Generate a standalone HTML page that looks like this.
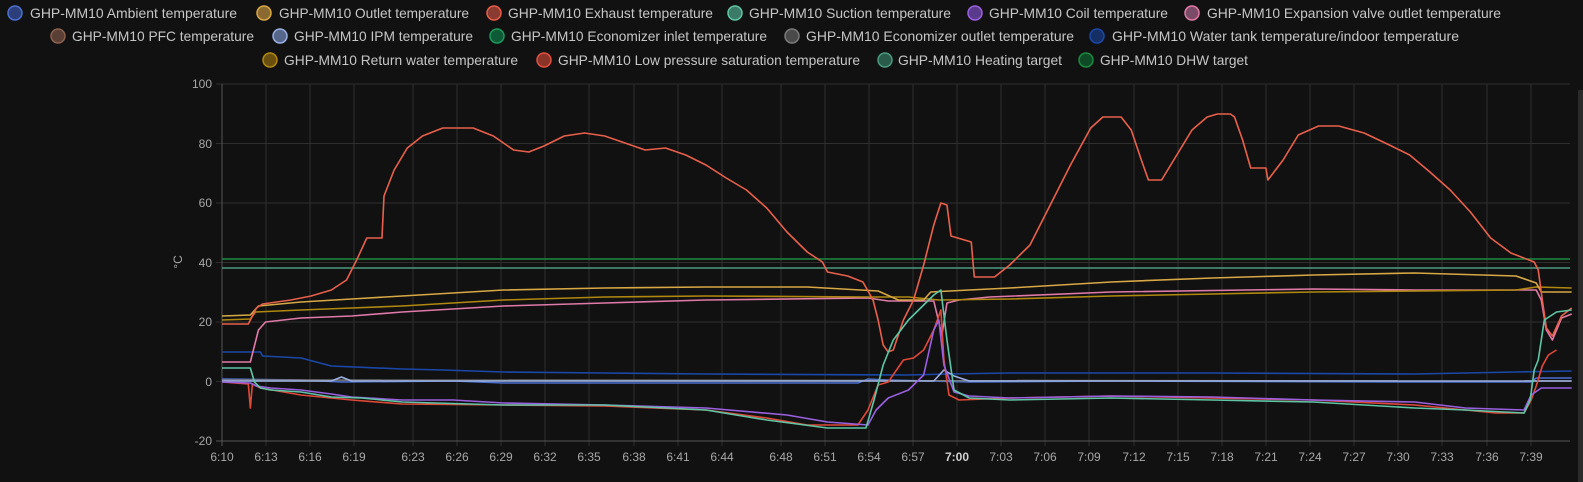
<!DOCTYPE html>
<html><head><meta charset="utf-8"><style>
html,body{margin:0;padding:0;background:#111111;width:1583px;height:482px;overflow:hidden}
svg{display:block}
text{font-family:"Liberation Sans",Roboto,sans-serif}
.lg{font-size:14px;fill:#c6c6c6}
.ax{font-size:12px;fill:#a8a8a8}
</style></head><body>
<svg width="1583" height="482" viewBox="0 0 1583 482" xmlns="http://www.w3.org/2000/svg">
<rect width="1583" height="482" fill="#111111"/>
<rect x="1578" y="90" width="5" height="392" fill="#2a2a2a"/>
<!-- legend -->
<g stroke-width="1.5">
<circle cx="15" cy="13" r="7" fill="#2c3f7a" stroke="#4a6fd0"/><text class="lg" x="30" y="18" textLength="207" lengthAdjust="spacingAndGlyphs">GHP-MM10 Ambient temperature</text>
<circle cx="264" cy="13" r="7" fill="#8a6a30" stroke="#d8a845"/><text class="lg" x="279" y="18" textLength="190" lengthAdjust="spacingAndGlyphs">GHP-MM10 Outlet temperature</text>
<circle cx="494" cy="13" r="7" fill="#8a3a30" stroke="#e85c48"/><text class="lg" x="508" y="18" textLength="205" lengthAdjust="spacingAndGlyphs">GHP-MM10 Exhaust temperature</text>
<circle cx="735" cy="13" r="7" fill="#3a7a66" stroke="#5fc5a5"/><text class="lg" x="749" y="18" textLength="202" lengthAdjust="spacingAndGlyphs">GHP-MM10 Suction temperature</text>
<circle cx="975" cy="13" r="7" fill="#5a3a8a" stroke="#9a60e0"/><text class="lg" x="989" y="18" textLength="179" lengthAdjust="spacingAndGlyphs">GHP-MM10 Coil temperature</text>
<circle cx="1192" cy="13" r="7" fill="#7a4a66" stroke="#e07aa8"/><text class="lg" x="1207" y="18" textLength="294" lengthAdjust="spacingAndGlyphs">GHP-MM10 Expansion valve outlet temperature</text>

<circle cx="58" cy="36" r="7" fill="#5a4034" stroke="#8a6050"/><text class="lg" x="72" y="41" textLength="182" lengthAdjust="spacingAndGlyphs">GHP-MM10 PFC temperature</text>
<circle cx="280" cy="36" r="7" fill="#56668a" stroke="#9ab0e0"/><text class="lg" x="294" y="41" textLength="179" lengthAdjust="spacingAndGlyphs">GHP-MM10 IPM temperature</text>
<circle cx="497" cy="36" r="7" fill="#0e5a36" stroke="#1a9a5a"/><text class="lg" x="511" y="41" textLength="256" lengthAdjust="spacingAndGlyphs">GHP-MM10 Economizer inlet temperature</text>
<circle cx="792" cy="36" r="7" fill="#4a4a4a" stroke="#7a7a7a"/><text class="lg" x="806" y="41" textLength="268" lengthAdjust="spacingAndGlyphs">GHP-MM10 Economizer outlet temperature</text>
<circle cx="1097" cy="36" r="7" fill="#162e66" stroke="#1a48a8"/><text class="lg" x="1112" y="41" textLength="347" lengthAdjust="spacingAndGlyphs">GHP-MM10 Water tank temperature/indoor temperature</text>

<circle cx="270" cy="60" r="7" fill="#6a5010" stroke="#b08810"/><text class="lg" x="284" y="65" textLength="234" lengthAdjust="spacingAndGlyphs">GHP-MM10 Return water temperature</text>
<circle cx="544" cy="60" r="7" fill="#8a3428" stroke="#e05040"/><text class="lg" x="558" y="65" textLength="302" lengthAdjust="spacingAndGlyphs">GHP-MM10 Low pressure saturation temperature</text>
<circle cx="885" cy="60" r="7" fill="#2a5a4a" stroke="#4a9a80"/><text class="lg" x="898" y="65" textLength="164" lengthAdjust="spacingAndGlyphs">GHP-MM10 Heating target</text>
<circle cx="1086" cy="60" r="7" fill="#0e4a26" stroke="#1a8a40"/><text class="lg" x="1100" y="65" textLength="148" lengthAdjust="spacingAndGlyphs">GHP-MM10 DHW target</text>
</g>
<!-- grid -->
<g stroke="#2e2e2e" stroke-width="1">
<line x1="216" y1="84" x2="1570" y2="84"/><line x1="216" y1="143.5" x2="1570" y2="143.5"/><line x1="216" y1="203" x2="1570" y2="203"/><line x1="216" y1="262.5" x2="1570" y2="262.5"/><line x1="216" y1="322" x2="1570" y2="322"/><line x1="216" y1="381.5" x2="1570" y2="381.5"/>
<line x1="266" y1="84" x2="266" y2="446"/><line x1="310" y1="84" x2="310" y2="446"/><line x1="354" y1="84" x2="354" y2="446"/><line x1="413" y1="84" x2="413" y2="446"/><line x1="457" y1="84" x2="457" y2="446"/><line x1="501" y1="84" x2="501" y2="446"/><line x1="545" y1="84" x2="545" y2="446"/><line x1="589" y1="84" x2="589" y2="446"/><line x1="634" y1="84" x2="634" y2="446"/><line x1="678" y1="84" x2="678" y2="446"/><line x1="722" y1="84" x2="722" y2="446"/><line x1="781" y1="84" x2="781" y2="446"/><line x1="825" y1="84" x2="825" y2="446"/><line x1="869" y1="84" x2="869" y2="446"/><line x1="913" y1="84" x2="913" y2="446"/><line x1="957" y1="84" x2="957" y2="446"/><line x1="1001" y1="84" x2="1001" y2="446"/><line x1="1045" y1="84" x2="1045" y2="446"/><line x1="1089" y1="84" x2="1089" y2="446"/><line x1="1134" y1="84" x2="1134" y2="446"/><line x1="1178" y1="84" x2="1178" y2="446"/><line x1="1222" y1="84" x2="1222" y2="446"/><line x1="1266" y1="84" x2="1266" y2="446"/><line x1="1310" y1="84" x2="1310" y2="446"/><line x1="1354" y1="84" x2="1354" y2="446"/><line x1="1398" y1="84" x2="1398" y2="446"/><line x1="1442" y1="84" x2="1442" y2="446"/><line x1="1487" y1="84" x2="1487" y2="446"/><line x1="1531" y1="84" x2="1531" y2="446"/>
</g>
<line x1="222" y1="84" x2="222" y2="446" stroke="#555" stroke-width="1"/>
<line x1="216" y1="441" x2="1570" y2="441" stroke="#555" stroke-width="1"/>
<!-- axis labels -->
<g class="ax" text-anchor="end">
<text x="212" y="88">100</text><text x="212" y="148">80</text><text x="212" y="207">60</text><text x="212" y="267">40</text><text x="212" y="326">20</text><text x="212" y="386">0</text><text x="212" y="445">-20</text>
</g>
<text class="ax" x="178" y="266" text-anchor="middle" transform="rotate(-90 178 262)">°C</text>
<g class="ax" text-anchor="middle">
<text x="222" y="461">6:10</text><text x="266" y="461">6:13</text><text x="310" y="461">6:16</text><text x="354" y="461">6:19</text><text x="413" y="461">6:23</text><text x="457" y="461">6:26</text><text x="501" y="461">6:29</text><text x="545" y="461">6:32</text><text x="589" y="461">6:35</text><text x="634" y="461">6:38</text><text x="678" y="461">6:41</text><text x="722" y="461">6:44</text><text x="781" y="461">6:48</text><text x="825" y="461">6:51</text><text x="869" y="461">6:54</text><text x="913" y="461">6:57</text><text x="957" y="461" font-weight="bold" fill="#d0d0d0">7:00</text><text x="1001" y="461">7:03</text><text x="1045" y="461">7:06</text><text x="1089" y="461">7:09</text><text x="1134" y="461">7:12</text><text x="1178" y="461">7:15</text><text x="1222" y="461">7:18</text><text x="1266" y="461">7:21</text><text x="1310" y="461">7:24</text><text x="1354" y="461">7:27</text><text x="1398" y="461">7:30</text><text x="1442" y="461">7:33</text><text x="1487" y="461">7:36</text><text x="1531" y="461">7:39</text>
</g>
<line x1="222" y1="259" x2="1570" y2="259" stroke="#1a8a40" stroke-width="1.6"/>
<line x1="222" y1="268" x2="1570" y2="268" stroke="#4a9a80" stroke-width="1.6"/>
<g fill="none" stroke-width="1.6" stroke-linejoin="round" transform="translate(222 0) scale(1.0125 1) translate(-222 0)">
<polyline stroke="#1a48a8" points="222,352 260,352 262,356 300,358 330,366 400,369 440,370 500,372 600,373 700,374 900,375 940,374 1000,373 1200,373 1400,374 1500,372 1555,371"/>
<polyline stroke="#4a6fd0" points="222,379 300,380 340,382 450,381 500,383 700,383 850,383 860,379 880,380 920,381 960,382 1100,381 1400,382 1515,382 1520,378 1555,378"/>
<polyline stroke="#7a7a7a" points="222,380 1555,381"/>
<polyline stroke="#9ab0e0" points="222,381 330,381 340,377 350,381 925,381 935,370 945,376 960,381 1555,381"/>
<polyline stroke="#e07aa8" points="222,362 250,362 254,346 258,330 265,322 300,318 350,316 400,312 500,306 600,303 700,300 860,298 880,301 925,301 933,335 938,303 950,300 980,297 1100,292 1300,289 1400,290 1520,290 1525,300 1530,330 1536,340 1545,318 1555,314"/>
<polyline stroke="#b08810" points="222,320 250,319 255,312 300,310 350,308 400,306 500,300 600,297 700,296 860,297 900,297 930,300 1000,299 1100,296 1300,292 1500,290 1520,287 1555,288"/>
<polyline stroke="#d8a845" points="222,316 250,315 258,306 300,302 350,299 400,296 500,290 600,288 700,287 800,287 870,291 890,300 915,300 922,292 960,290 1000,288 1100,282 1200,278 1300,275 1400,273 1500,276 1520,283 1525,292 1555,292"/>
<polyline stroke="#e8604a" points="222,324 248,324 256,308 262,304 290,300 310,296 330,290 345,280 355,260 365,238 380,238 382,196 392,170 405,148 420,136 440,128 470,128 490,136 510,150 525,152 540,146 560,136 580,133 600,136 620,143 640,150 660,148 680,155 700,165 720,178 740,190 760,208 780,232 800,252 815,262 820,272 840,276 855,282 865,300 870,320 875,345 880,352 885,350 895,320 905,300 915,265 925,225 932,203 938,205 942,236 962,242 965,277 985,277 1000,265 1020,245 1040,205 1060,165 1080,128 1092,117 1110,117 1120,130 1130,160 1137,180 1150,180 1165,155 1180,130 1195,117 1205,114 1218,114 1222,117 1230,140 1238,168 1253,168 1255,180 1270,160 1285,135 1305,126 1325,126 1350,133 1375,145 1395,155 1415,172 1435,190 1455,212 1475,238 1495,253 1518,262 1522,270 1526,300 1530,328 1536,336 1545,316 1555,308"/>
<polyline stroke="#e04838" points="222,382 248,384 250,408 252,384 260,388 300,395 350,400 400,404 500,405 600,406 700,410 760,418 800,425 850,425 860,410 870,385 880,382 895,360 905,358 915,350 925,330 932,310 935,360 940,395 950,400 1000,398 1100,396 1200,398 1300,400 1400,405 1480,413 1508,413 1515,400 1520,386 1526,366 1532,355 1540,350"/>
<polyline stroke="#9a60e0" points="222,382 250,383 256,386 270,388 300,390 330,394 350,397 400,400 450,400 500,403 600,405 700,408 780,415 820,422 860,425 868,410 880,398 900,390 915,375 925,330 930,320 935,365 945,392 960,396 1000,398 1100,396 1200,397 1300,400 1400,402 1450,408 1508,410 1515,395 1525,388 1555,388"/>
<polyline stroke="#5fc5a5" points="222,368 250,368 254,382 260,388 270,390 300,392 330,397 360,398 400,402 500,405 600,405 700,410 760,420 820,428 858,428 866,400 875,365 885,340 900,320 915,305 925,295 932,290 938,340 945,390 960,398 1000,400 1100,398 1200,400 1300,402 1400,408 1450,410 1508,413 1514,400 1518,370 1522,360 1528,320 1540,312 1555,310"/>
</g>
</svg>
</body></html>
